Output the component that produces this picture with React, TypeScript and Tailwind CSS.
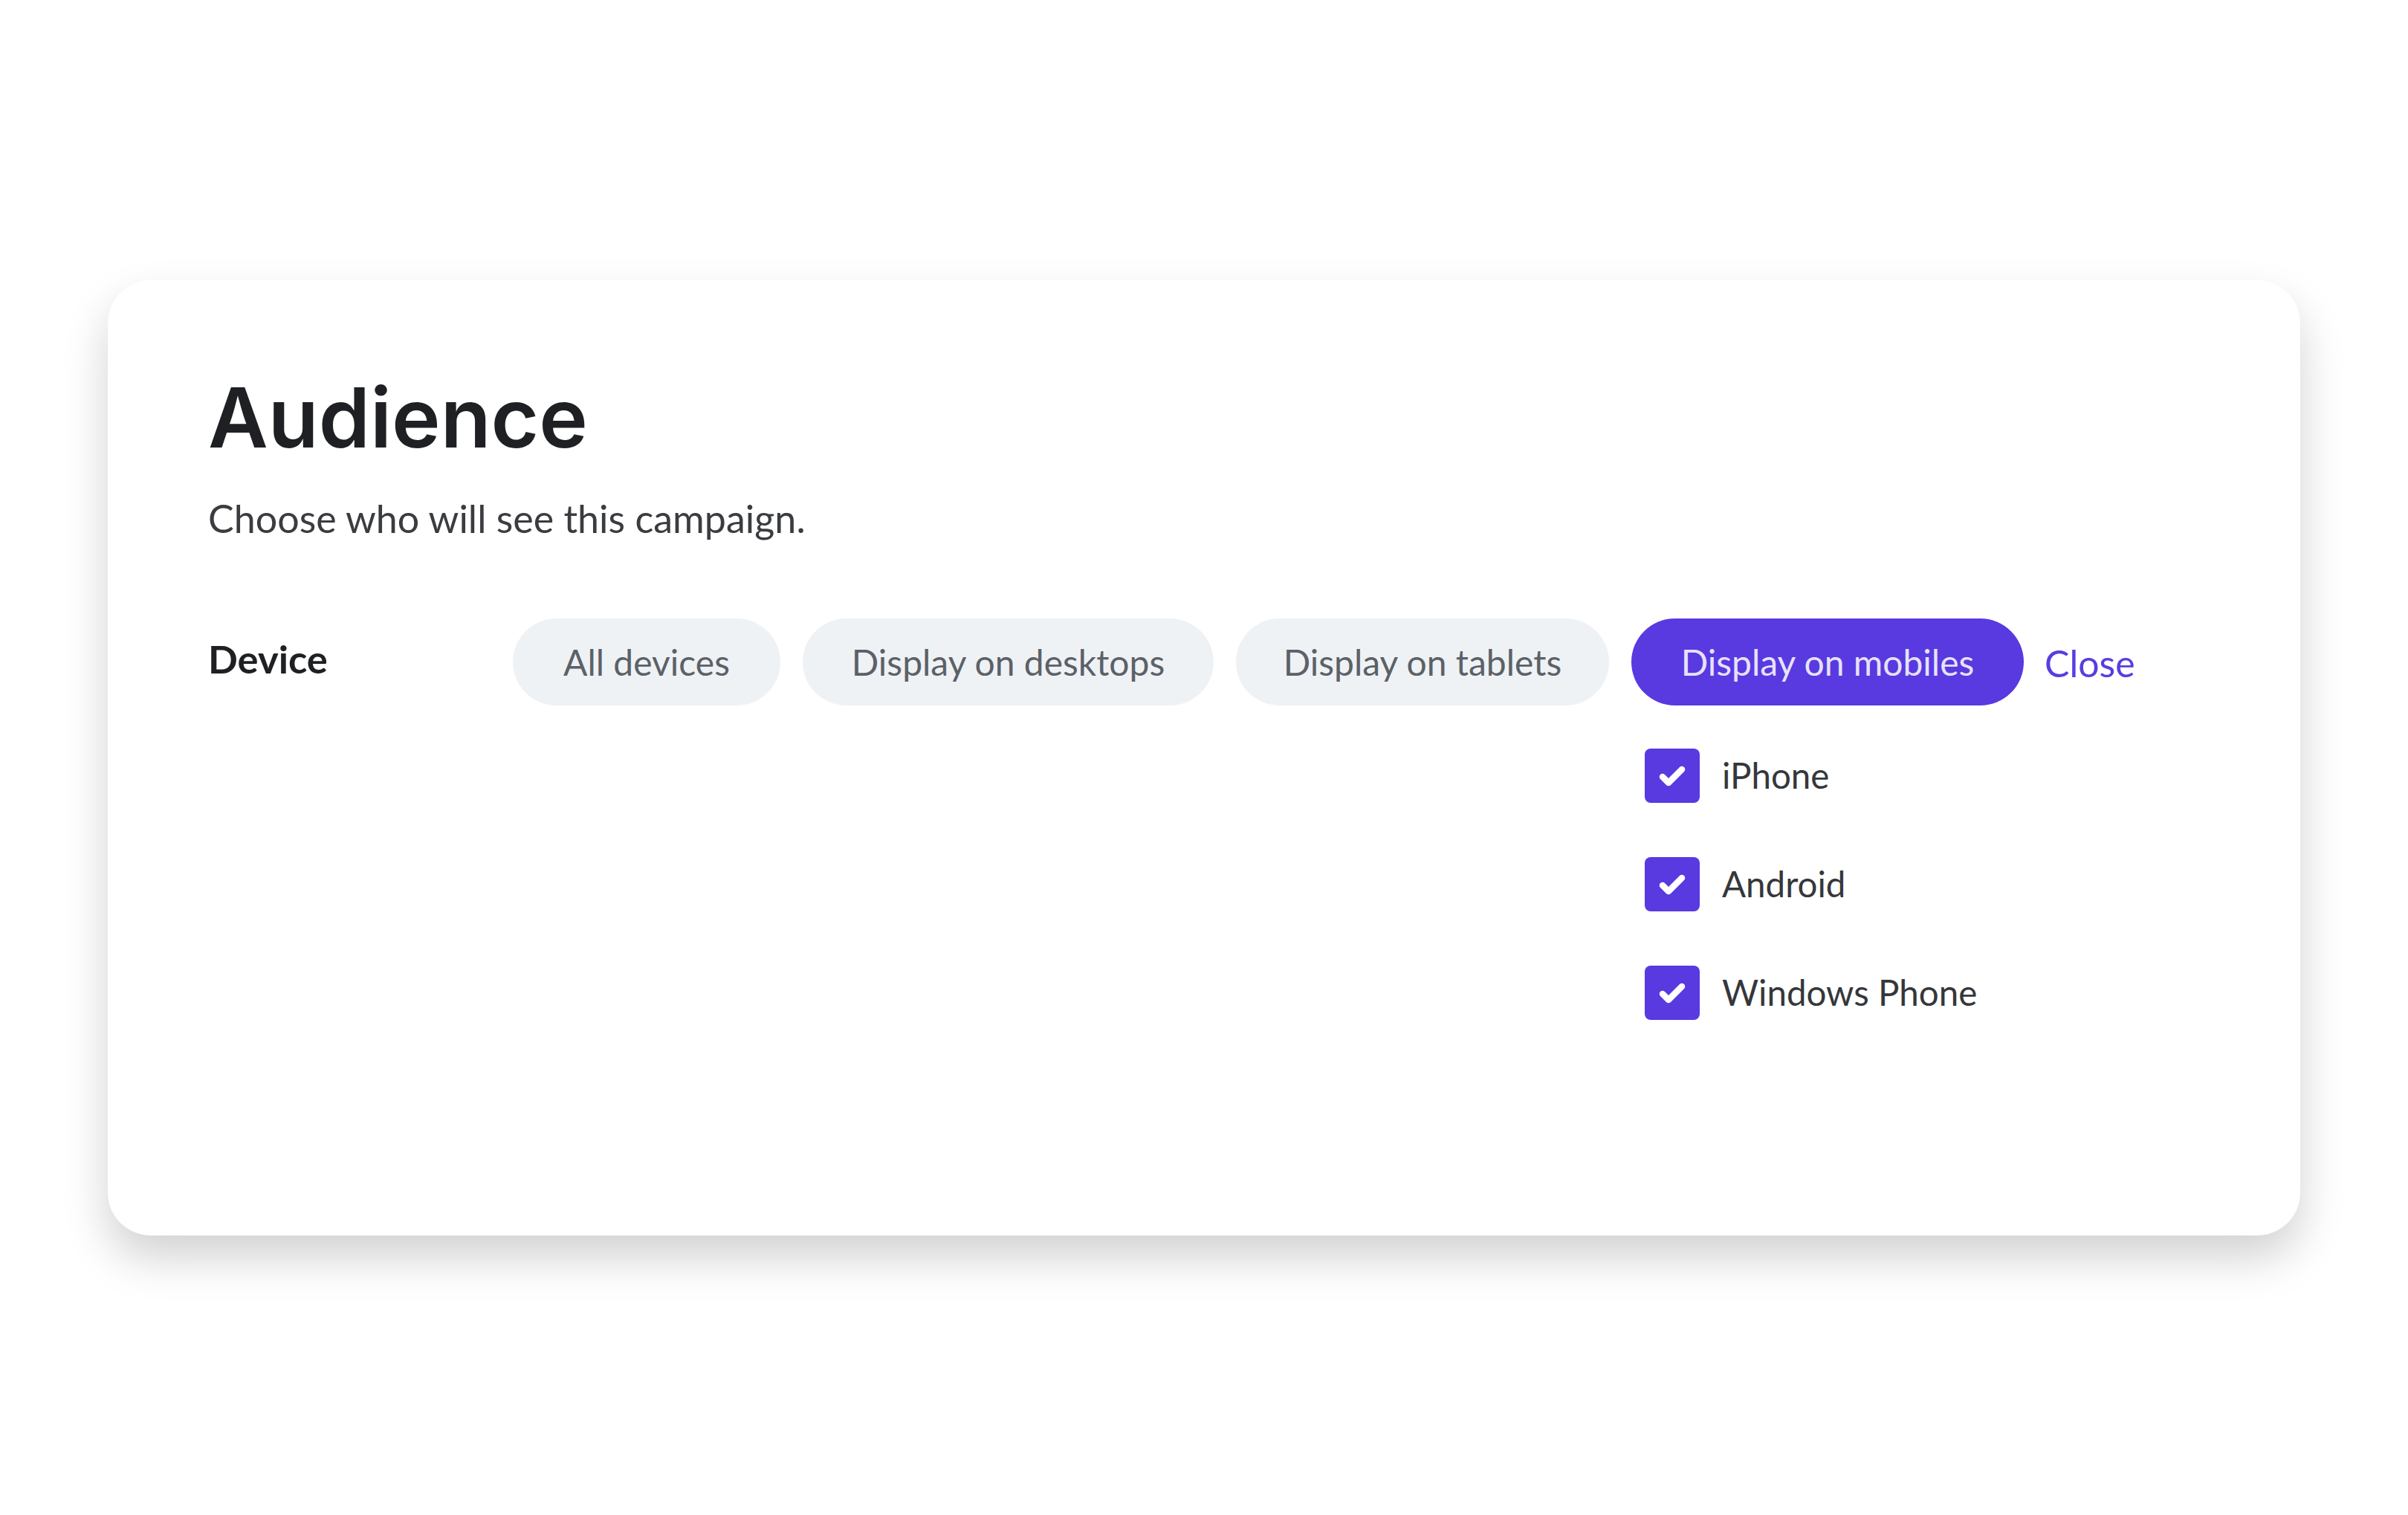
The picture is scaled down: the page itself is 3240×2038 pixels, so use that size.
const tabs = [
  { label: 'All devices', width: 'w-[360px]' },
  { label: 'Display on desktops', width: 'w-[553px]' },
  { label: 'Display on tablets', width: 'w-[502px]' },
]

const phones = ['iPhone', 'Android', 'Windows Phone']

function CheckBox() {
  return (
    <div className="w-[74px] h-[73px] rounded-[8px] bg-[#5939e0] flex-shrink-0">
      <svg viewBox="0 0 74 73" className="w-full h-full" fill="none">
        <path d="M24 38l8 8 18-18" stroke="#ffffff" strokeWidth="8.5" strokeLinecap="round" strokeLinejoin="round" />
      </svg>
    </div>
  )
}

export default function App() {
  return (
    <div className="min-h-screen bg-white flex items-center justify-center font-['Inter',sans-serif]">
      <div className="w-[2950px] h-[1285px] rounded-[58px] bg-white shadow-[0_30px_60px_rgba(0,0,0,0.18)] pl-[135px] pt-[120px]">
        <h1 className="text-[111px] leading-[130px] font-semibold text-[#1f2023]">Audience</h1>

        <p className="mt-[35px] font-['Lato',sans-serif] text-[52px] leading-[70px] text-[#3a3c40]">
          Choose who will see this campaign.
        </p>

        {/* device row */}
        <div className="flex mt-[100px]">
          <div className="w-[410px] pt-[22px] text-[52.5px] leading-[64px] font-bold text-[#1f2023] font-['Lato',sans-serif]">
            Device
          </div>

          <div className="flex gap-[30px] items-start">
            {tabs.map((tab) => (
              <button
                key={tab.label}
                className={`${tab.width} h-[117px] pt-[1px] rounded-full bg-[#eff2f5] text-[48px] text-[#5b6168] font-['Lato',sans-serif] text-center`}
              >
                {tab.label}
              </button>
            ))}

            <div className="flex flex-col">
              <button className="w-[528px] h-[117px] pt-[1px] rounded-full bg-[#5939e0] text-[48px] text-[#e6e2fb] font-['Lato',sans-serif] text-center">
                Display on mobiles
              </button>

              <div className="flex flex-col gap-[73px] mt-[58px] pl-[18px]">
                {phones.map((phone) => (
                  <label key={phone} className="flex items-center h-[73px] gap-[30px]">
                    <CheckBox />
                    <span className="text-[47.5px] text-[#35373b] font-['Lato',sans-serif]">{phone}</span>
                  </label>
                ))}
              </div>
            </div>

            <button className="h-[117px] pt-[4px] -ml-[2px] text-[50px] text-[#5a3de0] font-['Lato',sans-serif]">Close</button>
          </div>
        </div>
      </div>
    </div>
  )
}
